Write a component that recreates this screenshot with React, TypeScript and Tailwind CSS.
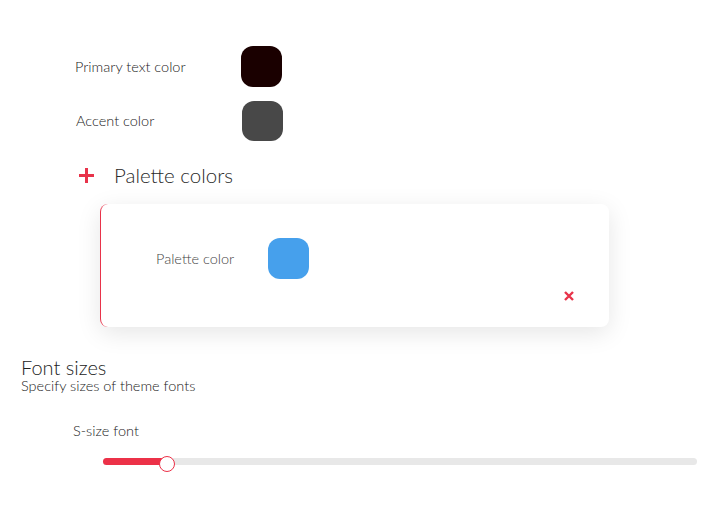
export default function App() {
  return (
    <div className="min-h-screen bg-white text-[#222] font-['Lato',sans-serif] font-light">
      <div className="pt-[46px] pl-[75px] flex flex-col gap-[14px]">
        <div className="flex items-center h-[41px]">
          <span className="w-[166px] text-[14.5px] leading-[17px]">Primary text color</span>
          <div className="w-[41px] h-[41px] rounded-[12px] bg-[#1a0000]" />
        </div>
        <div className="flex items-center h-[40px]">
          <span className="w-[167px] pl-px text-[14.5px] leading-[17px] -mt-[2px]">Accent color</span>
          <div className="w-[41px] h-[40px] rounded-[12px] bg-[#484848]" />
        </div>
      </div>

      <div className="mt-[22px] pl-[78px] flex items-center h-[24px]">
        <svg width="17" height="17" viewBox="0 0 17 17" className="text-[#e8334a]">
          <path d="M8.5 1v15M1 8.5h15" stroke="currentColor" strokeWidth="3" />
        </svg>
        <span className="ml-[19px] text-[20.5px] leading-[24px] -mt-[1px] text-[#2a2a2a]">Palette colors</span>
      </div>

      <div className="ml-[100px] mt-[17px] w-[509px] h-[123px] rounded-[8px] border-l border-[#e8334a] bg-white shadow-[0_6px_24px_rgba(0,0,0,0.1)] flex flex-col">
        <div className="flex items-center pt-[34px] pl-[55px]">
          <span className="w-[112px] text-[14.5px] leading-[17px] text-[#444]">Palette color</span>
          <div className="w-[41px] h-[41px] rounded-[12px] bg-[#46a0ec]" />
        </div>
        <div className="flex justify-end pr-[35px] pt-[12px]">
          <svg width="10" height="10" viewBox="0 0 10 10" className="text-[#e8334a]">
            <path d="M1 1l8 8M9 1l-8 8" stroke="currentColor" strokeWidth="2.4" />
          </svg>
        </div>
      </div>

      <div className="mt-[29px] pl-[21px]">
        <div className="text-[20px] leading-[22px]">Font sizes</div>
        <div className="text-[14.5px] leading-[15px]">Specify sizes of theme fonts</div>
      </div>

      <div className="mt-[29px] pl-[73px] text-[14.5px] leading-[17px]">S-size font</div>

      <div className="mt-[19px] ml-[103px] mr-[29px] relative h-[7px] rounded-full bg-[#e8e8e8]">
        <div className="h-full w-[64px] rounded-full bg-[#ec3148]" />
        <div className="absolute left-[56px] top-[-2px] w-[16px] h-[16px] rounded-full bg-white border-[1.5px] border-[#ec3148]" />
      </div>
    </div>
  );
}
